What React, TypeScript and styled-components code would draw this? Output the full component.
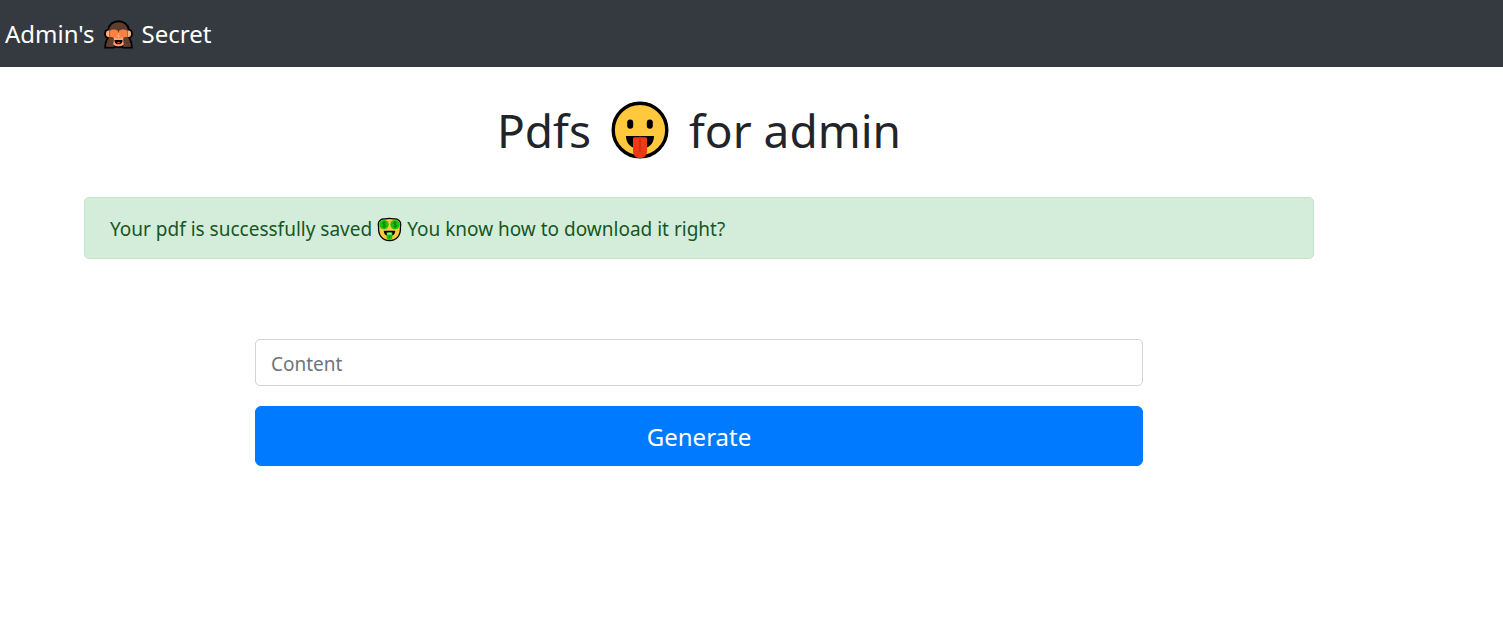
import React from 'react';
import styled, { createGlobalStyle } from 'styled-components';

const GlobalStyle = createGlobalStyle`
  *, *::before, *::after { box-sizing: border-box; }
  body {
    margin: 0;
    background: #fff;
    color: #212529;
    font-family: "Segoe UI", "Noto Sans", "Open Sans", sans-serif;
    font-size: 19px;
    line-height: 30px;
  }
`;

const Navbar = styled.nav`
  display: flex;
  padding: 15px 5px 14px;
  background: #343a40;
`;

const Brand = styled.a`
  display: flex;
  align-items: center;
  gap: 9px;
  color: #fff;
  font-size: 24px;
  line-height: 38px;
  text-decoration: none;
`;

const Main = styled.main`
  padding: 29px 189px 30px 84px;
`;

const Title = styled.h1`
  display: flex;
  justify-content: center;
  align-items: center;
  gap: 20px;
  margin: 0 0 33px;
  font-size: 46px;
  font-weight: 400;
  line-height: 68px;
`;

const Alert = styled.div`
  display: flex;
  align-items: center;
  gap: 5px;
  padding: 16px 25px 14px;
  border: 1px solid #c3e6cb;
  border-radius: 5px;
  background: #d4edda;
  color: #155724;
`;

const Form = styled.form`
  display: flex;
  flex-direction: column;
  gap: 20px;
  margin: 80px 171px 0;
`;

const TextInput = styled.input`
  width: 100%;
  height: 47px;
  padding: 9px 15px 7px;
  border: 1px solid #ced4da;
  border-radius: 5px;
  background: #fff;
  color: #495057;
  font: inherit;
  &::placeholder { color: #6c757d; opacity: 1; }
`;

const SubmitButton = styled.button`
  height: 60px;
  padding: 2px 20px 0;
  border: 1px solid #007bff;
  border-radius: 6px;
  background: #007bff;
  color: #fff;
  font: inherit;
  font-size: 24px;
  cursor: pointer;
`;

const Icon = styled.svg<{ $size: number }>`
  display: block;
  flex: none;
  width: ${(p) => p.$size}px;
  height: ${(p) => p.$size}px;
`;

const MonkeyIcon = () => (
  <Icon $size={29} viewBox="0 0 30 30" role="img" aria-label="See-no-evil monkey">
    <path
      d="M15 1.200C9.400 1.200 5.200 4.900 4.300 10 2.200 10.300 1.200 11.800 1.200 14.200c0 2.200 1 3.900 2.800 4.300C2.400 20.900 1.200 24 1.200 28.600h9l1.400-1.400c1 .6 2.200.9 3.400.9s2.400-.3 3.400-.9l1.400 1.400h9c0-4.600-1.200-7.700-2.800-10.100 1.800-.4 2.800-2.100 2.800-4.300 0-2.400-1-3.900-3.100-4.200C24.800 4.900 20.600 1.200 15 1.200z"
      fill="#5f3d2e" stroke="#000" strokeWidth="2" strokeLinejoin="round"
    />
    <path d="M5.600 10.800c-2.400-.2-3.600 1-3.600 3.400 0 2.200 1.100 3.600 3.600 3.400zM24.400 10.800c2.400-.2 3.600 1 3.600 3.400 0 2.200-1.100 3.600-3.600 3.400z" fill="#ffb07c" />
    <path d="M9.200 13h11.600l.6 9.500c0 3-2.700 4.700-6.400 4.700s-6.400-1.700-6.400-4.700z" fill="#ffa36c" />
    <path d="M6.200 11.200c2.400-1.800 6-1.600 8.300.3v3.600c-.8 2.400-2.600 3.300-4.300 3.300l-4-.8zM23.800 11.200c-2.400-1.800-6-1.600-8.300.3v3.600c.8 2.400 2.600 3.300 4.300 3.300l4-.8z" fill="#ff8142" />
    <path d="M5.800 17.500l4.200.7c.4 3.200 0 6.300-1.200 9.400H2.300c.2-4 1.400-7.200 3.500-10.100zM24.200 17.500l-4.200.7c-.4 3.200 0 6.300 1.200 9.400h6.500c-.2-4-1.400-7.200-3.500-10.100z" fill="#5f3d2e" />
    <path d="M13.500 17.600v1.200M16.500 17.600v1.200" stroke="#c4572c" strokeWidth=".9" />
    <path d="M10.800 20.600h8.400c0 3-1.700 4.600-4.200 4.600s-4.200-1.600-4.200-4.600z" fill="#000" />
    <path d="M12.800 23.600c.9-1.200 3.500-1.200 4.400 0-1 1-3.400 1-4.400 0z" fill="#f03a17" />
  </Icon>
);

const TongueIcon = () => (
  <Icon $size={58} viewBox="0 0 58 58" role="img" aria-label="Face with tongue">
    <circle cx="29" cy="29" r="26.800" fill="#ffc83d" stroke="#000" strokeWidth="3.400" />
    <rect x="16.200" y="18.400" width="6" height="9.400" rx="3" fill="#000" />
    <rect x="35.800" y="18.400" width="6" height="9.400" rx="3" fill="#000" />
    <path d="M15 35h28c0 7.500-5 13-14 13s-14-5.500-14-13z" fill="#000" />
    <path d="M22 38c0-1 .6-1.700 1.600-1.700h10.800c1 0 1.600.7 1.600 1.700v12.500c0 4-2.800 6.500-7 6.500s-7-2.500-7-6.500z" fill="#f03a17" />
    <path d="M29 36.500v13.500" stroke="#d33112" strokeWidth="2" strokeLinecap="round" />
  </Icon>
);

const MoneyIcon = () => (
  <Icon $size={25} viewBox="0 0 25 25" role="img" aria-label="Money-mouth face">
    <path
      d="M12.500 1.400c-2 0-3.300.3-4.500.5-3.900-.3-6.700 2-6.700 5.400 0 1.200.2 2 .3 2.900C1 18.200 5.400 23.500 12.500 23.500S24 18.200 23.400 10.200c.1-.9.3-1.700.3-2.900 0-3.400-2.800-5.700-6.700-5.400-1.200-.2-2.500-.5-4.500-.5z"
      fill="#ffc83d" stroke="#000" strokeWidth="1.300"
    />
    <circle cx="7" cy="7.600" r="4.700" fill="#16c60c" />
    <circle cx="18" cy="7.600" r="4.700" fill="#16c60c" />
    <g fill="none" stroke="#0a6b05" strokeWidth=".7">
      <path d="M8.700 6c-.8-.8-3.300-.8-3.300.4 0 1.400 3.400.8 3.400 2.300 0 1.400-2.600 1.400-3.500.5M7 4.100v7.200" />
      <path d="M19.700 6c-.8-.8-3.300-.8-3.300.4 0 1.400 3.400.8 3.400 2.300 0 1.400-2.600 1.400-3.500.5M18 4.100v7.200" />
    </g>
    <path d="M6.800 13.800h11.400c0 3.400-2.200 5.400-5.700 5.400s-5.700-2-5.700-5.400z" fill="#000" />
    <path d="M9.600 15.400h5.800v4.600c0 1.800-1.100 2.800-2.900 2.800s-2.900-1-2.900-2.800z" fill="#16c60c" />
    <path d="M10.400 15.600h4.200v2h-4.200z" fill="#a8f0a0" />
    <path d="M12.500 18.600v2.400" stroke="#0b8a06" strokeWidth=".8" />
  </Icon>
);

export default function App() {
  return (
    <>
      <GlobalStyle />
      <Navbar>
        <Brand href="#">
          <span>Admin's</span>
          <MonkeyIcon />
          <span>Secret</span>
        </Brand>
      </Navbar>
      <Main>
        <Title>
          <span>Pdfs</span>
          <TongueIcon />
          <span>for admin</span>
        </Title>
        <Alert role="alert">
          <span>Your pdf is successfully saved</span>
          <MoneyIcon />
          <span>You know how to download it right?</span>
        </Alert>
        <Form onSubmit={(e) => e.preventDefault()}>
          <TextInput type="text" name="content" placeholder="Content" aria-label="Content" />
          <SubmitButton type="submit">Generate</SubmitButton>
        </Form>
      </Main>
    </>
  );
}
